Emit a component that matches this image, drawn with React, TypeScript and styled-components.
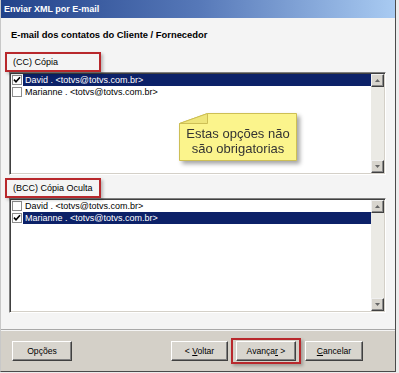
import React from "react";
import styled, { createGlobalStyle } from "styled-components";

const GlobalStyle = createGlobalStyle`
  * { box-sizing: border-box; }
  html, body { margin: 0; padding: 0; background: #ececec; }
  body { font-family: "Liberation Sans", Arial, sans-serif; color: #000; }
`;

type Contact = {
  name: string;
  email: string;
  checked: boolean;
  selected: boolean;
};

const ccContacts: Contact[] = [
  { name: "David", email: "totvs@totvs.com.br", checked: true, selected: true },
  { name: "Marianne", email: "totvs@totvs.com.br", checked: false, selected: false },
];

const bccContacts: Contact[] = [
  { name: "David", email: "totvs@totvs.com.br", checked: false, selected: false },
  { name: "Marianne", email: "totvs@totvs.com.br", checked: true, selected: true },
];

const CheckMark = () => (
  <svg width="8" height="8" viewBox="0 0 8 8">
    <path d="M1 3.6 L3 5.8 L7 1.2" fill="none" stroke="#000" strokeWidth="1.6" />
  </svg>
);

const Arrow = ({ down }: { down?: boolean }) => (
  <svg width="5" height="3" viewBox="0 0 5 3">
    <path d={down ? "M0 0 H5 L2.5 3 Z" : "M0 3 H5 L2.5 0 Z"} fill="#666" />
  </svg>
);

const ContactList = ({ contacts, height }: { contacts: Contact[]; height: number }) => (
  <ListBox $height={height}>
    <Rows>
      {contacts.map((c) => (
        <Row key={c.name}>
          <CheckCell>
            <CheckBox>{c.checked && <CheckMark />}</CheckBox>
          </CheckCell>
          <RowText $selected={c.selected}>
            {c.name} . &lt;{c.email}&gt;
          </RowText>
        </Row>
      ))}
    </Rows>
    <ScrollBar>
      <ScrollButton>
        <Arrow />
      </ScrollButton>
      <ScrollTrack />
      <ScrollButton>
        <Arrow down />
      </ScrollButton>
    </ScrollBar>
  </ListBox>
);

const App = () => {
  return (
    <>
      <GlobalStyle />
      <Window>
        <TitleBar>Enviar XML por E-mail</TitleBar>
        <Content>
          <Heading>E-mail dos contatos do Cliente / Fornecedor</Heading>
          <SectionLabel $top={11}>(CC) Cópia</SectionLabel>
          <ContactList contacts={ccContacts} height={103} />
          <SectionLabel $top={3}>(BCC) Cópia Oculta</SectionLabel>
          <ContactList contacts={bccContacts} height={115} />
        </Content>
        <Footer>
          <Button $width={60}>
            <span>Opções</span>
          </Button>
          <FooterSpacer />
          <Button $width={57}>
            <span>
              &lt; <u>V</u>oltar
            </span>
          </Button>
          <Highlight>
            <Button $width={60}>
              <span>
                Avança<u>r</u> &gt;
              </span>
            </Button>
          </Highlight>
          <Button $width={58}>
            <span>
              <u>C</u>ancelar
            </span>
          </Button>
        </Footer>
        <Note>
          <svg width="122" height="52" viewBox="0 0 122 52">
            <path
              d="M28.5 0.5 H117.5 V47.5 H0.5 V10.5 Z"
              fill="#fbf48c"
              stroke="#cdbf55"
            />
            <path d="M0.5 10.5 L28.5 0.5 V10.5 Z" fill="#eee57a" stroke="#cdbf55" />
          </svg>
          <NoteText>
            Estas opções não
            <br />
            são obrigatorias
          </NoteText>
        </Note>
      </Window>
    </>
  );
};

export default App;

const Window = styled.div`
  position: relative;
  width: 396px;
  height: 372px;
  display: flex;
  flex-direction: column;
  background: #f4f4f4;
  border-right: 1px solid #4a4a4a;
  border-bottom: 1px solid #4a4a4a;
  border-left: 1px solid #c8c8c8;
`;

const TitleBar = styled.div`
  height: 18px;
  line-height: 18px;
  padding-left: 3px;
  background: linear-gradient(90deg, #22428a 0%, #5678b8 50%, #a9cbf2 100%);
  color: #fff;
  font-weight: bold;
  font-size: 9px;
`;

const Content = styled.div`
  flex: 1;
  display: flex;
  flex-direction: column;
  padding: 11px 9px 0 8px;
`;

const Heading = styled.div`
  font-weight: bold;
  font-size: 9.4px;
  line-height: 12px;
  padding-left: 2px;
  white-space: nowrap;
`;

const SectionLabel = styled.div<{ $top: number }>`
  position: relative;
  z-index: 1;
  margin: ${(p) => p.$top}px 0 0 -4px;
  width: 96px;
  height: 20px;
  display: flex;
  align-items: center;
  padding-left: 6px;
  border: 2px solid #b8282c;
  box-shadow: 2px 2px 3px rgba(0, 0, 0, 0.25);
  font-size: 9px;
  white-space: nowrap;
`;

const ListBox = styled.div<{ $height: number }>`
  height: ${(p) => p.$height}px;
  display: flex;
  background: #fff;
  border: 1px solid;
  border-color: #808080 #ffffff #ffffff #808080;
  box-shadow: inset 1px 1px 0 #404040, inset -1px -1px 0 #d4d0c8;
  padding: 1px;
`;

const Rows = styled.div`
  flex: 1;
  display: flex;
  flex-direction: column;
`;

const Row = styled.div`
  display: flex;
  height: 12px;
`;

const CheckCell = styled.div`
  width: 12px;
  display: flex;
  align-items: center;
  padding-left: 1px;
`;

const CheckBox = styled.div`
  width: 10px;
  height: 10px;
  display: flex;
  align-items: center;
  justify-content: center;
  background: #fff;
  border: 1px solid #8c8c8c;
`;

const RowText = styled.div<{ $selected: boolean }>`
  flex: 1;
  height: 12px;
  line-height: 12px;
  padding-left: 2px;
  font-size: 9px;
  white-space: nowrap;
  background: ${(p) => (p.$selected ? "#0c2168" : "transparent")};
  color: ${(p) => (p.$selected ? "#fff" : "#000")};
`;

const ScrollBar = styled.div`
  width: 13px;
  display: flex;
  flex-direction: column;
  background: #ebeae5;
`;

const ScrollButton = styled.div`
  height: 13px;
  display: flex;
  align-items: center;
  justify-content: center;
  background: #d8d5ce;
  border: 1px solid;
  border-color: #f0f0f0 #404040 #404040 #f0f0f0;
  box-shadow: inset -1px -1px 0 #8a8a8a;
`;

const ScrollTrack = styled.div`
  flex: 1;
`;

const Footer = styled.div`
  height: 42px;
  display: flex;
  align-items: center;
  padding: 0 32px 0 11px;
  background: #d4d0c8;
  border-top: 1px solid #a8a8a8;
  box-shadow: inset 0 1px 0 #f4f4f4;
`;

const FooterSpacer = styled.div`
  flex: 1;
`;

const Button = styled.div<{ $width: number }>`
  width: ${(p) => p.$width}px;
  height: 20px;
  display: flex;
  align-items: center;
  justify-content: center;
  font-size: 8.6px;
  white-space: nowrap;
  background: #d8d5ce;
  border: 1px solid;
  border-color: #ffffff #404040 #404040 #ffffff;
  box-shadow: inset -1px -1px 0 #808080;

  u {
    text-decoration-thickness: 1px;
  }
`;

const Highlight = styled.div`
  margin: 0 4px 0 3px;
  padding: 1px 3px;
  border: 2px solid #b8282c;
  box-shadow: 2px 2px 3px rgba(0, 0, 0, 0.25);
`;

const Note = styled.div`
  position: absolute;
  left: 178px;
  top: 113px;
  width: 122px;
  height: 52px;
  filter: drop-shadow(3px 3px 2px rgba(0, 0, 0, 0.35));

  svg {
    position: absolute;
    left: 0;
    top: 0;
  }
`;

const NoteText = styled.div`
  position: relative;
  width: 118px;
  padding-top: 13px;
  text-align: center;
  font-size: 13px;
  line-height: 15px;
  color: #333;
`;
